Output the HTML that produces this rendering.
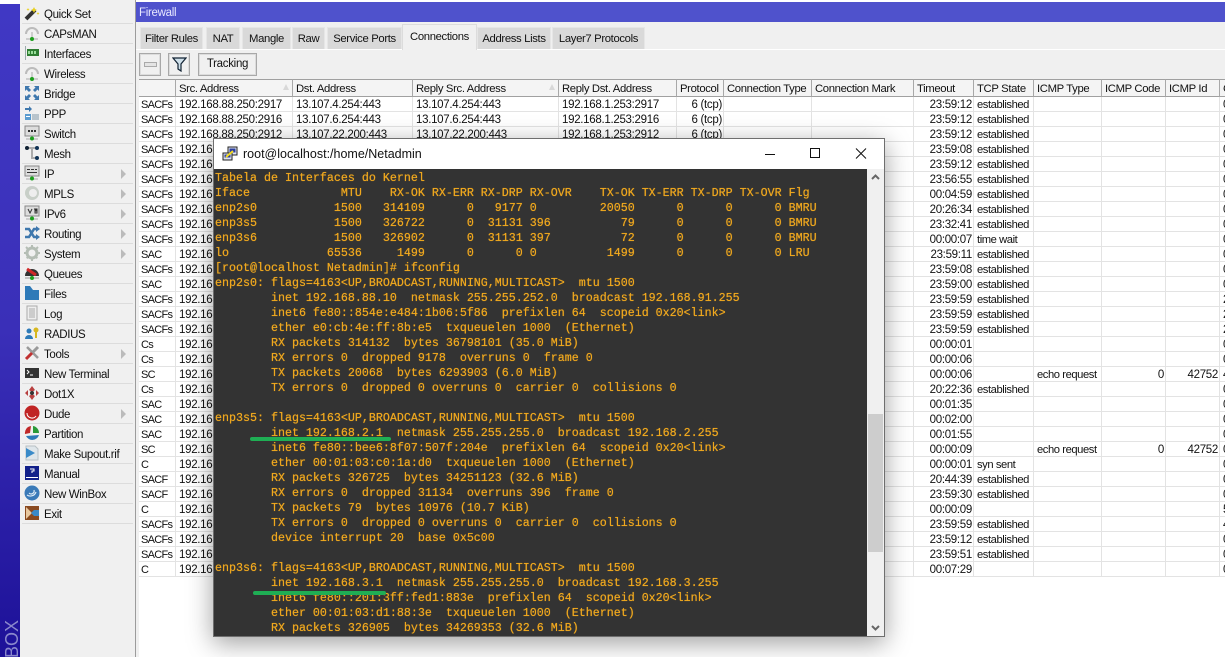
<!DOCTYPE html>
<html><head><meta charset="utf-8"><title>Firewall</title>
<style>
html,body{margin:0;padding:0;background:#fff}
#p{position:relative;width:1225px;height:657px;overflow:hidden;background:#fff;font:11.5px "Liberation Sans",sans-serif;letter-spacing:-.3px;color:#111}
#p div,#p svg{position:absolute}
#strip{left:0;top:4px;width:20px;height:653px;background:linear-gradient(#4038c4,#3a2fb8 50%,#1d1198)}
#box{left:-18px;top:640px;width:60px;height:20px;transform:rotate(-90deg);color:#8a88cc;font-size:18px;letter-spacing:0;line-height:20px;text-align:right;white-space:nowrap}
#menu{left:20px;top:0;width:115px;height:657px;background:#f0f0f0}
.m{left:22px;width:111px;height:20px;border-bottom:1px solid #dcdcdc;box-sizing:border-box;line-height:22px;padding-left:22px;white-space:nowrap;font-size:11.5px;letter-spacing:-.35px}
.m svg{left:2px;top:1px;width:16px;height:16px}
.a{left:99px;top:5px;width:0;height:0;border-left:5px solid #bbb;border-top:5px solid transparent;border-bottom:5px solid transparent}
#sep{left:135px;top:0;width:1px;height:657px;background:#9c9c9c}
#panel{left:136px;top:22px;width:1089px;height:57px;background:#f0f0f0}
#left2{left:136px;top:22px;width:3px;height:635px;background:#f0f0f0}
#title{left:136px;top:2px;width:1089px;height:20px;background:#4f52cc;color:#e8e8ff;line-height:22px;padding-left:3px;box-sizing:border-box;font-size:11.5px}
#wl{left:136px;top:49px;width:1089px;height:1px;background:#fff}
.t{top:27px;height:22px;background:#d9d9d9;border:1px solid #e6e6e6;border-bottom:0;box-sizing:border-box;text-align:center;line-height:22px;white-space:nowrap;font-size:11.3px;letter-spacing:-.35px}
.b{top:53px;height:23px;border:1px solid #a8a8a8;box-shadow:inset 0 0 0 1px #dcdcdc;background:#f0f0f0;box-sizing:border-box;text-align:center;line-height:21px;font-size:11.5px}
#tw{left:139px;top:79px;width:1086px;height:500px;overflow:hidden}
table{border-collapse:separate;border-spacing:0;table-layout:fixed;width:1101px}
th{height:18px;box-sizing:border-box;border-top:1px solid #a0a0a0;border-bottom:1px solid #a0a0a0;border-right:1px solid #a8a8a8;font-weight:normal;text-align:left;padding:1px 0 0 3px;background:#f4f4f4;white-space:nowrap;overflow:hidden;position:relative;font-size:11.3px;letter-spacing:-.35px}
th i{position:absolute;right:3px;top:4px;width:0;height:0;border-left:3px solid transparent;border-right:3px solid transparent;border-bottom:6px solid #d8d8d8}
td{height:15px;box-sizing:border-box;border-bottom:1px solid #e3e3e3;border-right:1px solid #e3e3e3;padding:2px 1px 0 3px;line-height:12px;white-space:nowrap;overflow:hidden;font-size:11.5px;letter-spacing:-.3px}
td:nth-child(1){font-size:11px;letter-spacing:-.7px;padding-left:2px}
td:nth-child(10),td:nth-child(11){font-size:11.2px;letter-spacing:-.42px}
td:nth-child(6),td:nth-child(9),td:nth-child(12),td:nth-child(13){text-align:right}
#win{left:213px;top:138px;width:672px;height:499px;background:#fff;border:1px solid #6e6e6e;box-sizing:border-box;box-shadow:0 6px 24px rgba(0,0,0,.38)}
#wt{left:29px;top:7px;font-size:12.5px;letter-spacing:0;line-height:16px;color:#111;white-space:nowrap}
#term{left:0;top:30px;width:653px;height:467px;background:#333;overflow:hidden}
pre{position:absolute;left:1px;top:2px;margin:0;font:11.67px/15px "Liberation Mono",monospace;letter-spacing:0;color:#f0a81e;white-space:pre;text-shadow:0 0 .6px #f0a81e}
#sb{left:653px;top:30px;width:17px;height:467px;background:#f0f0f0}
#th{left:1px;top:245px;width:15px;height:138px;background:#cdcdcd}
.g{background:#1fae54;height:4px;border-radius:2px}
</style></head><body><div id="p">
<div id="strip"></div><div id="box">BOX</div>
<div id="menu"></div>
<div class="m" style="top:4px"><svg viewBox="0 0 16 16"><path d="M2 14L11 5" stroke="#333" stroke-width="4"/><path d="M10 2l1 2 2 1-2 1-1 2-1-2-2-1 2-1zM14 7l.5 1 1 .5-1 .5-.5 1-.5-1-1-.5 1-.5zM4 3l.5 1 1 .5-1 .5-.5 1-.5-1-1-.5 1-.5z" fill="#e8d020"/></svg>Quick Set</div>
<div class="m" style="top:24px"><svg viewBox="0 0 16 16"><path d="M2 9a6 6 0 0 1 12 0" fill="none" stroke="#bbb" stroke-width="2"/><path d="M8 7v7M2 14h12" stroke="#aaa"/><circle cx="8" cy="14" r="2" fill="#1ea01e"/></svg>CAPsMAN</div>
<div class="m" style="top:44px"><svg viewBox="0 0 16 16"><rect x="1" y="1" width="1" height="14" fill="#9aa"/><rect x="3" y="4" width="12" height="7" fill="#2e7d32"/><path d="M4 6h2v3H4zM7 6h2v3H7zM10 6h2v3h-2z" fill="#9d9"/></svg>Interfaces</div>
<div class="m" style="top:64px"><svg viewBox="0 0 16 16"><path d="M2 9a6 6 0 0 1 12 0" fill="none" stroke="#bbb" stroke-width="2"/><path d="M8 7v7M2 14h12" stroke="#aaa"/><circle cx="8" cy="14" r="2" fill="#1ea01e"/></svg>Wireless</div>
<div class="m" style="top:84px"><svg viewBox="0 0 16 16"><path d="M1 1h5L4.500 2.500 7 5 5 7 2.500 4.500 1 6zM15 1v5l-1.500-1.500L11 7 9 5l2.500-2.500L10 1zM1 15v-5l1.500 1.500L5 9l2 2-2.500 2.500L6 15zM15 15h-5l1.500-1.500L9 11l2-2 2.500 2.500L15 10z" fill="#3f78ad"/></svg>Bridge</div>
<div class="m" style="top:104px"><svg viewBox="0 0 16 16"><path d="M1 3h4V1l3 3-3 3V5H1z" fill="#3f78ad"/><rect x="1" y="9" width="6" height="6" fill="#5a9bd0"/><rect x="8" y="9" width="7" height="6" fill="#b8c4cc"/><rect x="2" y="11" width="4" height="1" fill="#fff"/></svg>PPP</div>
<div class="m" style="top:124px"><svg viewBox="0 0 16 16"><rect x="1" y="1" width="14" height="10" fill="#ddd" stroke="#888"/><path d="M4 5h2v2H4zM7 5h2v2H7zM10 5h2v2h-2z" fill="#333"/><path d="M2 14h12" stroke="#aaa"/><circle cx="8" cy="13.500" r="2" fill="#1ea01e"/></svg>Switch</div>
<div class="m" style="top:144px"><svg viewBox="0 0 16 16"><path d="M3 3h10M8 3v10h5" stroke="#aaa" stroke-width="2" fill="none"/><circle cx="3" cy="3" r="2" fill="#123"/><circle cx="13" cy="3" r="2" fill="#135"/><circle cx="13" cy="13" r="2" fill="#135"/></svg>Mesh</div>
<div class="m" style="top:164px"><svg viewBox="0 0 16 16"><rect x="1" y="1" width="14" height="10" fill="#ddd" stroke="#888"/><path d="M3 4h3v1H3zM7 4h3v1H7zM11 4h2v1h-2zM3 7h10v1H3z" fill="#333"/><path d="M2 14h12" stroke="#aaa"/><circle cx="8" cy="13.500" r="2" fill="#1ea01e"/></svg>IP<div class="a"></div></div>
<div class="m" style="top:184px"><svg viewBox="0 0 16 16"><circle cx="8" cy="8" r="7" fill="#c8cfc8"/><circle cx="9" cy="8" r="4" fill="#eee"/></svg>MPLS<div class="a"></div></div>
<div class="m" style="top:204px"><svg viewBox="0 0 16 16"><rect x="1" y="1" width="14" height="10" fill="#ddd" stroke="#888"/><path d="M4 4l2 4 2-4M10 4h3v1h-2v3h2V6h-2" stroke="#333" fill="none"/><path d="M2 14h12" stroke="#aaa"/><circle cx="8" cy="13.500" r="2" fill="#1ea01e"/></svg>IPv6<div class="a"></div></div>
<div class="m" style="top:224px"><svg viewBox="0 0 16 16"><path d="M1 12h4l5-8h3M1 4h4l5 8h3" stroke="#3f78ad" stroke-width="2.500" fill="none"/><path d="M12 1l4 3-4 3zM12 9l4 3-4 3z" fill="#3f78ad"/></svg>Routing<div class="a"></div></div>
<div class="m" style="top:244px"><svg viewBox="0 0 16 16"><circle cx="8" cy="8" r="5" fill="none" stroke="#b4bdb4" stroke-width="3"/><path d="M8 0v16M0 8h16M2 2l12 12M14 2L2 14" stroke="#b4bdb4" stroke-width="2" stroke-dasharray="3 10 3"/></svg>System<div class="a"></div></div>
<div class="m" style="top:264px"><svg viewBox="0 0 16 16"><path d="M1 11a7 7 0 0 1 14 0z" fill="#333"/><path d="M3 4l9 6" stroke="#d02828" stroke-width="3"/><path d="M1 13h14" stroke="#999"/><circle cx="8" cy="13" r="2" fill="#1ea01e"/></svg>Queues</div>
<div class="m" style="top:284px"><svg viewBox="0 0 16 16"><path d="M1 1h5l3 4h6v10H1z" fill="#2e7ab8"/></svg>Files</div>
<div class="m" style="top:304px"><svg viewBox="0 0 16 16"><rect x="3" y="1" width="10" height="14" fill="#eee" stroke="#aaa"/><path d="M5 4h6M5 6h6M5 8h6M5 10h6M5 12h6" stroke="#aaa"/></svg>Log</div>
<div class="m" style="top:324px"><svg viewBox="0 0 16 16"><circle cx="5" cy="6" r="2.500" fill="#2e7ab8"/><path d="M1 14a4 4 0 0 1 8 0z" fill="#2e7ab8"/><circle cx="12" cy="5" r="2.500" fill="#d8b820"/><path d="M12 7v6" stroke="#d8b820" stroke-width="2"/></svg>RADIUS</div>
<div class="m" style="top:344px"><svg viewBox="0 0 16 16"><path d="M3 2l11 11" stroke="#999" stroke-width="2.500"/><path d="M14 2L9 7" stroke="#999" stroke-width="3"/><path d="M8 8l-6 6" stroke="#c03030" stroke-width="3"/></svg>Tools<div class="a"></div></div>
<div class="m" style="top:364px"><svg viewBox="0 0 16 16"><rect x="1" y="3" width="14" height="10" fill="#333"/><path d="M3 5l2 2-2 2M6 10h3" stroke="#fff" fill="none"/></svg>New Terminal</div>
<div class="m" style="top:384px"><svg viewBox="0 0 16 16"><path d="M8 1l3 4-3 2-3-2zM8 15l3-4-3-2-3 2zM1 8l3-3v6zM15 8l-3-3v6z" fill="#b84040"/><circle cx="8" cy="8" r="2" fill="#333"/></svg>Dot1X</div>
<div class="m" style="top:404px"><svg viewBox="0 0 16 16"><circle cx="8" cy="8" r="7.500" fill="#c02424"/><path d="M3 8a5 5 0 0 0 9 3" stroke="#fff" fill="none"/></svg>Dude<div class="a"></div></div>
<div class="m" style="top:424px"><svg viewBox="0 0 16 16"><path d="M7 1a7 7 0 0 0-6 8l5-1z" fill="#c02828"/><path d="M9 1a7 7 0 0 1 6 7H9z" fill="#2a9a38"/><path d="M2 11l13-1a7 7 0 0 1-13 1z" fill="#2e7ab8"/></svg>Partition</div>
<div class="m" style="top:444px"><svg viewBox="0 0 16 16"><path d="M2 1h9l3 3v11H2z" fill="#dfe6ea" stroke="#b8c0c4"/><path d="M2 3l9 5-9 5z" fill="#3a8ac8"/></svg>Make Supout.rif</div>
<div class="m" style="top:464px"><svg viewBox="0 0 16 16"><rect x="1" y="1" width="14" height="14" fill="#12208a"/><rect x="2" y="12" width="12" height="1" fill="#fff"/><path d="M6 4h4v2H8v2" stroke="#fff" fill="none"/></svg>Manual</div>
<div class="m" style="top:484px"><svg viewBox="0 0 16 16"><circle cx="8" cy="8" r="7.500" fill="#3a7ab8"/><path d="M3 10a6 6 0 0 0 9-3M5 8a3 3 0 0 0 5-3" stroke="#dceaf6" fill="none" stroke-width="1.200"/></svg>New WinBox</div>
<div class="m" style="top:504px"><svg viewBox="0 0 16 16"><rect x="1" y="1" width="14" height="14" fill="#8a4a20"/><path d="M2 2l6 6-6 6" fill="#e8c8a0"/><path d="M15 5v6H10L7 8l3-3z" fill="#3a8ac8"/></svg>Exit</div>
<div id="sep"></div><div id="left2"></div><div id="panel"></div>
<div id="title">Firewall</div><div id="wl"></div>
<div class="t" style="left:140px;width:63px">Filter Rules</div>
<div class="t" style="left:206px;width:34px">NAT</div>
<div class="t" style="left:242px;width:49px">Mangle</div>
<div class="t" style="left:292px;width:33px">Raw</div>
<div class="t" style="left:327px;width:75px">Service Ports</div>
<div class="t" style="left:402px;width:75px;top:24px;height:26px;background:#f0f0f0;border:1px solid #dcdcdc;border-bottom:0;line-height:24px">Connections</div>
<div class="t" style="left:477px;width:74px">Address Lists</div>
<div class="t" style="left:552px;width:93px">Layer7 Protocols</div>
<div class="b" style="left:139px;width:22px"><div style="left:4px;top:8px;width:11px;height:3px;border:1px solid #aaa;background:#e4e4e4"></div></div>
<div class="b" style="left:168px;width:22px"><svg style="left:3px;top:3px;width:15px;height:15px" viewBox="0 0 15 15"><path d="M1 1h13L9 7v7l-3-2V7z" fill="#cfe0ea" stroke="#123" stroke-width="1.200"/></svg></div>
<div class="b" style="left:198px;width:59px">Tracking</div>
<div id="tw"><table><colgroup><col style="width:37px"><col style="width:117px"><col style="width:120px"><col style="width:146px"><col style="width:118px"><col style="width:47px"><col style="width:88px"><col style="width:102px"><col style="width:60px"><col style="width:60px"><col style="width:68px"><col style="width:64px"><col style="width:54px"><col style="width:20px"></colgroup>
<tr><th></th><th>Src. Address<i></i></th><th>Dst. Address</th><th>Reply Src. Address<i></i></th><th>Reply Dst. Address</th><th>Protocol</th><th>Connection Type</th><th>Connection Mark</th><th>Timeout</th><th>TCP State</th><th>ICMP Type</th><th>ICMP Code</th><th>ICMP Id</th><th>C</th></tr>
<tr><td>SACFs</td><td>192.168.88.250:2917</td><td>13.107.4.254:443</td><td>13.107.4.254:443</td><td>192.168.1.253:2917</td><td>6 (tcp)</td><td></td><td></td><td>23:59:12</td><td>established</td><td></td><td></td><td></td><td>0</td></tr>
<tr><td>SACFs</td><td>192.168.88.250:2916</td><td>13.107.6.254:443</td><td>13.107.6.254:443</td><td>192.168.1.253:2916</td><td>6 (tcp)</td><td></td><td></td><td>23:59:12</td><td>established</td><td></td><td></td><td></td><td>0</td></tr>
<tr><td>SACFs</td><td>192.168.88.250:2912</td><td>13.107.22.200:443</td><td>13.107.22.200:443</td><td>192.168.1.253:2912</td><td>6 (tcp)</td><td></td><td></td><td>23:59:12</td><td>established</td><td></td><td></td><td></td><td>0</td></tr>
<tr><td>SACFs</td><td>192.168.88.250</td><td></td><td></td><td></td><td></td><td></td><td></td><td>23:59:08</td><td>established</td><td></td><td></td><td></td><td>0</td></tr>
<tr><td>SACFs</td><td>192.168.88.250</td><td></td><td></td><td></td><td></td><td></td><td></td><td>23:59:12</td><td>established</td><td></td><td></td><td></td><td>0</td></tr>
<tr><td>SACFs</td><td>192.168.88.250</td><td></td><td></td><td></td><td></td><td></td><td></td><td>23:56:55</td><td>established</td><td></td><td></td><td></td><td>0</td></tr>
<tr><td>SACFs</td><td>192.168.88.250</td><td></td><td></td><td></td><td></td><td></td><td></td><td>00:04:59</td><td>established</td><td></td><td></td><td></td><td>0</td></tr>
<tr><td>SACFs</td><td>192.168.88.250</td><td></td><td></td><td></td><td></td><td></td><td></td><td>20:26:34</td><td>established</td><td></td><td></td><td></td><td>0</td></tr>
<tr><td>SACFs</td><td>192.168.88.250</td><td></td><td></td><td></td><td></td><td></td><td></td><td>23:32:41</td><td>established</td><td></td><td></td><td></td><td>0</td></tr>
<tr><td>SACFs</td><td>192.168.88.250</td><td></td><td></td><td></td><td></td><td></td><td></td><td>00:00:07</td><td>time wait</td><td></td><td></td><td></td><td>0</td></tr>
<tr><td>SAC</td><td>192.168.88.250</td><td></td><td></td><td></td><td></td><td></td><td></td><td>23:59:11</td><td>established</td><td></td><td></td><td></td><td>0</td></tr>
<tr><td>SACFs</td><td>192.168.88.250</td><td></td><td></td><td></td><td></td><td></td><td></td><td>23:59:08</td><td>established</td><td></td><td></td><td></td><td>0</td></tr>
<tr><td>SAC</td><td>192.168.88.250</td><td></td><td></td><td></td><td></td><td></td><td></td><td>23:59:00</td><td>established</td><td></td><td></td><td></td><td>0</td></tr>
<tr><td>SACFs</td><td>192.168.88.250</td><td></td><td></td><td></td><td></td><td></td><td></td><td>23:59:59</td><td>established</td><td></td><td></td><td></td><td>2</td></tr>
<tr><td>SACFs</td><td>192.168.88.250</td><td></td><td></td><td></td><td></td><td></td><td></td><td>23:59:59</td><td>established</td><td></td><td></td><td></td><td>2</td></tr>
<tr><td>SACFs</td><td>192.168.88.250</td><td></td><td></td><td></td><td></td><td></td><td></td><td>23:59:59</td><td>established</td><td></td><td></td><td></td><td>2</td></tr>
<tr><td>Cs</td><td>192.168.88.250</td><td></td><td></td><td></td><td></td><td></td><td></td><td>00:00:01</td><td></td><td></td><td></td><td></td><td>0</td></tr>
<tr><td>Cs</td><td>192.168.88.250</td><td></td><td></td><td></td><td></td><td></td><td></td><td>00:00:06</td><td></td><td></td><td></td><td></td><td>0</td></tr>
<tr><td>SC</td><td>192.168.88.250</td><td></td><td></td><td></td><td></td><td></td><td></td><td>00:00:06</td><td></td><td>echo request</td><td>0</td><td>42752</td><td>4</td></tr>
<tr><td>Cs</td><td>192.168.88.250</td><td></td><td></td><td></td><td></td><td></td><td></td><td>20:22:36</td><td>established</td><td></td><td></td><td></td><td>0</td></tr>
<tr><td>SAC</td><td>192.168.88.250</td><td></td><td></td><td></td><td></td><td></td><td></td><td>00:01:35</td><td></td><td></td><td></td><td></td><td>0</td></tr>
<tr><td>SAC</td><td>192.168.88.250</td><td></td><td></td><td></td><td></td><td></td><td></td><td>00:02:00</td><td></td><td></td><td></td><td></td><td>0</td></tr>
<tr><td>SAC</td><td>192.168.88.250</td><td></td><td></td><td></td><td></td><td></td><td></td><td>00:01:55</td><td></td><td></td><td></td><td></td><td>0</td></tr>
<tr><td>SC</td><td>192.168.88.250</td><td></td><td></td><td></td><td></td><td></td><td></td><td>00:00:09</td><td></td><td>echo request</td><td>0</td><td>42752</td><td>0</td></tr>
<tr><td>C</td><td>192.168.88.250</td><td></td><td></td><td></td><td></td><td></td><td></td><td>00:00:01</td><td>syn sent</td><td></td><td></td><td></td><td>0</td></tr>
<tr><td>SACF</td><td>192.168.88.250</td><td></td><td></td><td></td><td></td><td></td><td></td><td>20:44:39</td><td>established</td><td></td><td></td><td></td><td>0</td></tr>
<tr><td>SACF</td><td>192.168.88.250</td><td></td><td></td><td></td><td></td><td></td><td></td><td>23:59:30</td><td>established</td><td></td><td></td><td></td><td>0</td></tr>
<tr><td>C</td><td>192.168.88.250</td><td></td><td></td><td></td><td></td><td></td><td></td><td>00:00:09</td><td></td><td></td><td></td><td></td><td>5</td></tr>
<tr><td>SACFs</td><td>192.168.88.250</td><td></td><td></td><td></td><td></td><td></td><td></td><td>23:59:59</td><td>established</td><td></td><td></td><td></td><td>4</td></tr>
<tr><td>SACFs</td><td>192.168.88.250</td><td></td><td></td><td></td><td></td><td></td><td></td><td>23:59:12</td><td>established</td><td></td><td></td><td></td><td>0</td></tr>
<tr><td>SACFs</td><td>192.168.88.250</td><td></td><td></td><td></td><td></td><td></td><td></td><td>23:59:51</td><td>established</td><td></td><td></td><td></td><td>0</td></tr>
<tr><td>C</td><td>192.168.88.250</td><td></td><td></td><td></td><td></td><td></td><td></td><td>00:07:29</td><td></td><td></td><td></td><td></td><td>0</td></tr>
</table></div>
<div id="win">
<svg style="left:8px;top:7px;width:16px;height:16px" viewBox="0 0 16 16"><rect x="6" y="1" width="9" height="8" fill="#dfe3f0" stroke="#222"/><rect x="7.500" y="2.500" width="6" height="4" fill="#2a3ea0"/><rect x="1" y="7" width="9" height="7" fill="#dfe3f0" stroke="#222"/><rect x="2.500" y="8.500" width="6" height="3" fill="#2a3ea0"/><path d="M4 11l7-6" stroke="#f0d820" stroke-width="2"/></svg>
<div id="wt">root@localhost:/home/Netadmin</div>
<svg style="left:550px;top:8px;width:110px;height:14px" viewBox="0 0 110 14"><path d="M1 7.500h10" stroke="#111"/><rect x="46.500" y="1.500" width="9" height="9" fill="none" stroke="#111"/><path d="M92 1.500l10 10M102 1.500l-10 10" stroke="#111"/></svg>
<div id="term"><pre>Tabela de Interfaces do Kernel
Iface             MTU    RX-OK RX-ERR RX-DRP RX-OVR    TX-OK TX-ERR TX-DRP TX-OVR Flg
enp2s0           1500   314109      0   9177 0         20050      0      0      0 BMRU
enp3s5           1500   326722      0  31131 396          79      0      0      0 BMRU
enp3s6           1500   326902      0  31131 397          72      0      0      0 BMRU
lo              65536     1499      0      0 0          1499      0      0      0 LRU
[root@localhost Netadmin]# ifconfig
enp2s0: flags=4163&lt;UP,BROADCAST,RUNNING,MULTICAST&gt;  mtu 1500
        inet 192.168.88.10  netmask 255.255.252.0  broadcast 192.168.91.255
        inet6 fe80::854e:e484:1b06:5f86  prefixlen 64  scopeid 0x20&lt;link&gt;
        ether e0:cb:4e:ff:8b:e5  txqueuelen 1000  (Ethernet)
        RX packets 314132  bytes 36798101 (35.0 MiB)
        RX errors 0  dropped 9178  overruns 0  frame 0
        TX packets 20068  bytes 6293903 (6.0 MiB)
        TX errors 0  dropped 0 overruns 0  carrier 0  collisions 0

enp3s5: flags=4163&lt;UP,BROADCAST,RUNNING,MULTICAST&gt;  mtu 1500
        inet 192.168.2.1  netmask 255.255.255.0  broadcast 192.168.2.255
        inet6 fe80::bee6:8f07:507f:204e  prefixlen 64  scopeid 0x20&lt;link&gt;
        ether 00:01:03:c0:1a:d0  txqueuelen 1000  (Ethernet)
        RX packets 326725  bytes 34251123 (32.6 MiB)
        RX errors 0  dropped 31134  overruns 396  frame 0
        TX packets 79  bytes 10976 (10.7 KiB)
        TX errors 0  dropped 0 overruns 0  carrier 0  collisions 0
        device interrupt 20  base 0x5c00

enp3s6: flags=4163&lt;UP,BROADCAST,RUNNING,MULTICAST&gt;  mtu 1500
        inet 192.168.3.1  netmask 255.255.255.0  broadcast 192.168.3.255
        inet6 fe80::201:3ff:fed1:883e  prefixlen 64  scopeid 0x20&lt;link&gt;
        ether 00:01:03:d1:88:3e  txqueuelen 1000  (Ethernet)
        RX packets 326905  bytes 34269353 (32.6 MiB)</pre></div>
<div id="sb"><div id="th"></div>
<svg style="left:3px;top:4px;width:11px;height:8px" viewBox="0 0 11 8"><path d="M2 6l3.500-3.500L9 6" fill="none" stroke="#666" stroke-width="2"/></svg>
<svg style="left:3px;top:455px;width:11px;height:8px" viewBox="0 0 11 8"><path d="M2 2l3.500 3.500L9 2" fill="none" stroke="#666" stroke-width="2"/></svg>
</div>
</div>
<div class="g" style="left:250px;top:437px;width:141px"></div>
<div class="g" style="left:253px;top:591px;width:133px"></div>
</div></body></html>
